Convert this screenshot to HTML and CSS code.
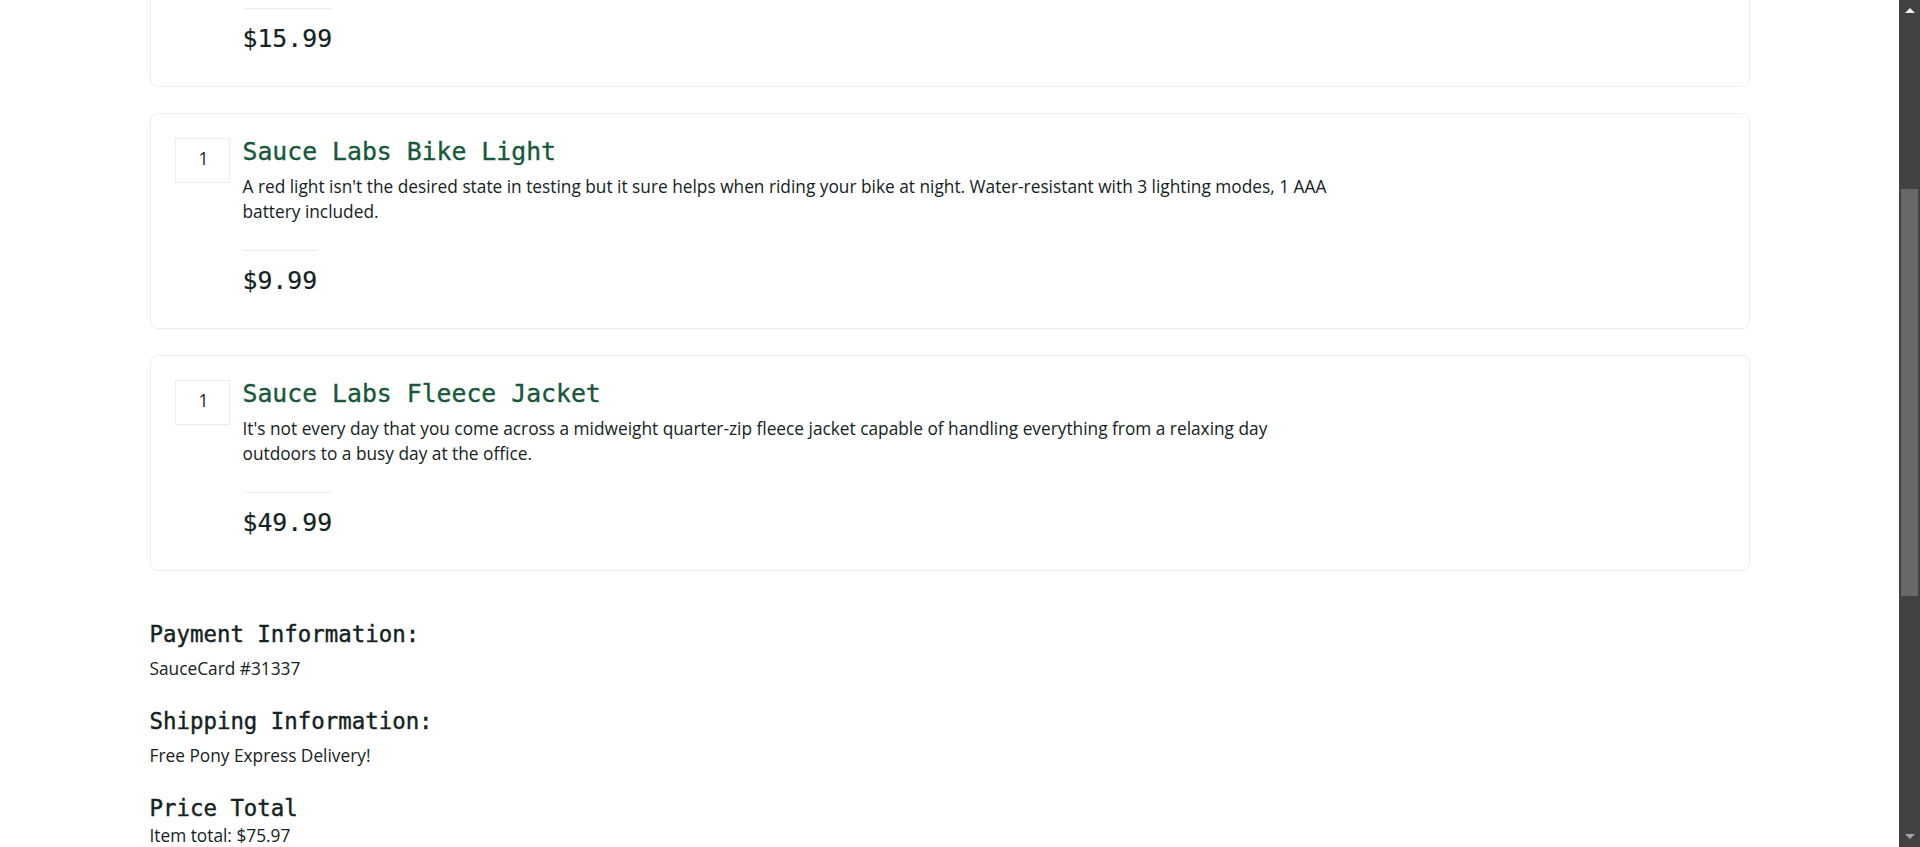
FILE: index.html
```html
<!DOCTYPE html>
<html lang="en">
<head>
<meta charset="utf-8">
<title>Swag Labs</title>
<link rel="stylesheet" href="styles.css">
</head>
<body>
<div class="app">
  <main class="viewport">
    <div class="container">
      <div class="cart-list">
        <div class="cart-item">
          <div class="qty">1</div>
          <div class="item-label">
            <div class="item-name">Sauce Labs Bolt T-Shirt</div>
            <div class="item-desc">Get your testing superhero on with the Sauce Labs bolt T-shirt. From American Apparel, 100% ringspun combed cotton, heather gray with red bolt.</div>
            <div class="pricebar"><div class="price">$15.99</div></div>
          </div>
        </div>
        <div class="cart-item">
          <div class="qty">1</div>
          <div class="item-label">
            <div class="item-name">Sauce Labs Bike Light</div>
            <div class="item-desc">A red light isn't the desired state in testing but it sure helps when riding your bike at night. Water-resistant with 3 lighting modes, 1 AAA battery included.</div>
            <div class="pricebar"><div class="price">$9.99</div></div>
          </div>
        </div>
        <div class="cart-item">
          <div class="qty">1</div>
          <div class="item-label">
            <div class="item-name">Sauce Labs Fleece Jacket</div>
            <div class="item-desc">It's not every day that you come across a midweight quarter-zip fleece jacket capable of handling everything from a relaxing day outdoors to a busy day at the office.</div>
            <div class="pricebar"><div class="price">$49.99</div></div>
          </div>
        </div>
      </div>
      <div class="summary">
        <div class="summary-label">Payment Information:</div>
        <div class="summary-value">SauceCard #31337</div>
        <div class="summary-label">Shipping Information:</div>
        <div class="summary-value">Free Pony Express Delivery!</div>
        <div class="summary-label">Price Total</div>
        <div class="summary-subtotal">Item total: $75.97</div>
      </div>
    </div>
  </main>
  <div class="scrollbar">
    <div class="sb-button"><span class="arrow-up"></span></div>
    <div class="sb-track"><div class="sb-thumb"></div></div>
    <div class="sb-button"><span class="arrow-down"></span></div>
  </div>
</div>
</body>
</html>
```

FILE: styles.css
```css
html, body {
  margin: 0;
  height: 100%;
  overflow: hidden;
  background: #ffffff;
}
body {
  font-family: "Open Sans", "Noto Sans", sans-serif;
  color: #132322;
}
.app {
  display: flex;
  height: 100vh;
}
.viewport {
  flex: 1;
  min-width: 0;
  overflow: hidden;
}
.container {
  max-width: 1600px;
  margin: 0 auto;
}
/* list is shown scrolled: first card partly above the viewport */
.cart-list {
  margin-top: -129px;
}
.cart-item {
  display: flex;
  align-items: flex-start;
  border: 1px solid #ededef;
  border-radius: 8px;
  padding: 24px;
  margin-bottom: 26px;
}
.qty {
  flex: none;
  box-sizing: border-box;
  width: 55px;
  height: 45px;
  margin-right: 13px;
  border: 1px solid #ededef;
  text-align: center;
  font-size: 17.5px;
  line-height: 39px;
  padding: 0 0 4px 3px;
}
.item-label {
  flex: 1;
  min-width: 0;
}
.item-name {
  font-family: "DejaVu Sans Mono", monospace;
  font-size: 24.8px;
  line-height: 28px;
  color: #18583a;
  -webkit-text-stroke: 0.35px #18583a;
}
.item-desc {
  margin-top: 8px;
  max-width: 1095px;
  font-size: 17.3px;
  line-height: 25px;
}
.pricebar {
  margin-top: 26px;
}
.price {
  display: inline-block;
  border-top: 1px solid #ededef;
  padding-top: 6px;
  font-family: "DejaVu Sans Mono", monospace;
  font-size: 24.8px;
  line-height: 47px;
  -webkit-text-stroke: 0.2px #132322;
}
.summary {
  padding-top: 24px;
}
.summary-label {
  font-family: "DejaVu Sans Mono", monospace;
  font-size: 22.4px;
  line-height: 26px;
  -webkit-text-stroke: 0.4px #132322;
}
.summary-value {
  font-size: 17.3px;
  line-height: 25px;
  padding-top: 9px;
  padding-bottom: 27px;
}
.summary-subtotal {
  font-size: 17.3px;
  line-height: 25px;
  padding-top: 2px;
}
.scrollbar {
  flex: none;
  width: 21px;
  background: #424242;
  display: flex;
  flex-direction: column;
}
.sb-button {
  height: 21px;
  display: flex;
  align-items: center;
  justify-content: center;
}
.arrow-up {
  width: 0;
  height: 0;
  border-left: 5px solid transparent;
  border-right: 5px solid transparent;
  border-bottom: 5px solid #eeeeee;
}
.arrow-down {
  width: 0;
  height: 0;
  border-left: 5px solid transparent;
  border-right: 5px solid transparent;
  border-top: 5px solid #a3a3a3;
}
.sb-track {
  flex: 1;
  padding: 0 2px;
}
.sb-thumb {
  margin-top: 168px;
  height: 407px;
  background: #686868;
}
```
